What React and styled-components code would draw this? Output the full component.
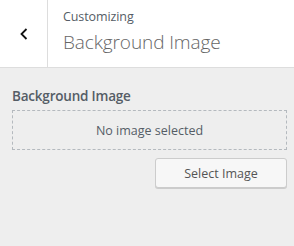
import React from 'react';
import styled, { createGlobalStyle } from "styled-components";

const GlobalStyle = createGlobalStyle`
  html, body {
    margin: 0;
    padding: 0;
    background: #eeeeee;
    font-family: "Open Sans", "Noto Sans", sans-serif;
  }
`;

const App = () => {
    return (
        <Container>
            <GlobalStyle />
            <Header>
                <BackButton aria-label="Back">
                    <svg width="12" height="14" viewBox="0 0 12 14">
                        <path d="M8.5 2 L3.5 7 L8.5 12" fill="none" stroke="#111" strokeWidth="1.8" />
                    </svg>
                </BackButton>
                <Titles>
                    <Crumb>Customizing</Crumb>
                    <Title>Background Image</Title>
                </Titles>
            </Header>

            <Section>
                <Label>Background Image</Label>
                <Placeholder>No image selected</Placeholder>
                <Actions>
                    <Button>Select Image</Button>
                </Actions>
            </Section>
        </Container>
    )
}
export default App;

const Container = styled.div`
  width: 294px;
  height: 246px;
  background: #eeeeee;
`;

const Header = styled.div`
  display: flex;
  height: 67px;
  background: #fff;
  border-bottom: 1px solid #dddddd;
`;

const BackButton = styled.div`
  width: 47px;
  border-right: 1px solid #dddddd;
  display: flex;
  align-items: center;
  justify-content: center;
`;

const Titles = styled.div`
  display: flex;
  flex-direction: column;
  padding: 7px 0 0 15px;
`;

const Crumb = styled.span`
  font-size: 12.5px;
  line-height: 20px;
  color: #555d66;
  letter-spacing: -0.1px;
`;

const Title = styled.span`
  font-size: 19px;
  line-height: 30px;
  font-weight: 300;
  color: #666;
  letter-spacing: -0.1px;
`;

const Section = styled.div`
  padding: 19px 7px 0 12px;
  display: flex;
  flex-direction: column;
`;

const Label = styled.div`
  font-size: 13.5px;
  font-weight: 600;
  line-height: 18px;
  color: #555d66;
  letter-spacing: -0.2px;
  margin-bottom: 5px;
`;

const Placeholder = styled.div`
  height: 38px;
  border: 1px dashed #b4b9be;
  display: flex;
  align-items: center;
  justify-content: center;
  font-size: 12.5px;
  color: #555d66;
`;

const Actions = styled.div`
  display: flex;
  justify-content: flex-end;
  margin-top: 8px;
`;

const Button = styled.button`
  width: 132px;
  height: 30px;
  background: #f7f7f7;
  border: 1px solid #cccccc;
  border-radius: 3px;
  box-shadow: 0 1px 0 #cccccc;
  font-family: inherit;
  font-size: 12.5px;
  color: #555555;
  padding: 0;
`;
